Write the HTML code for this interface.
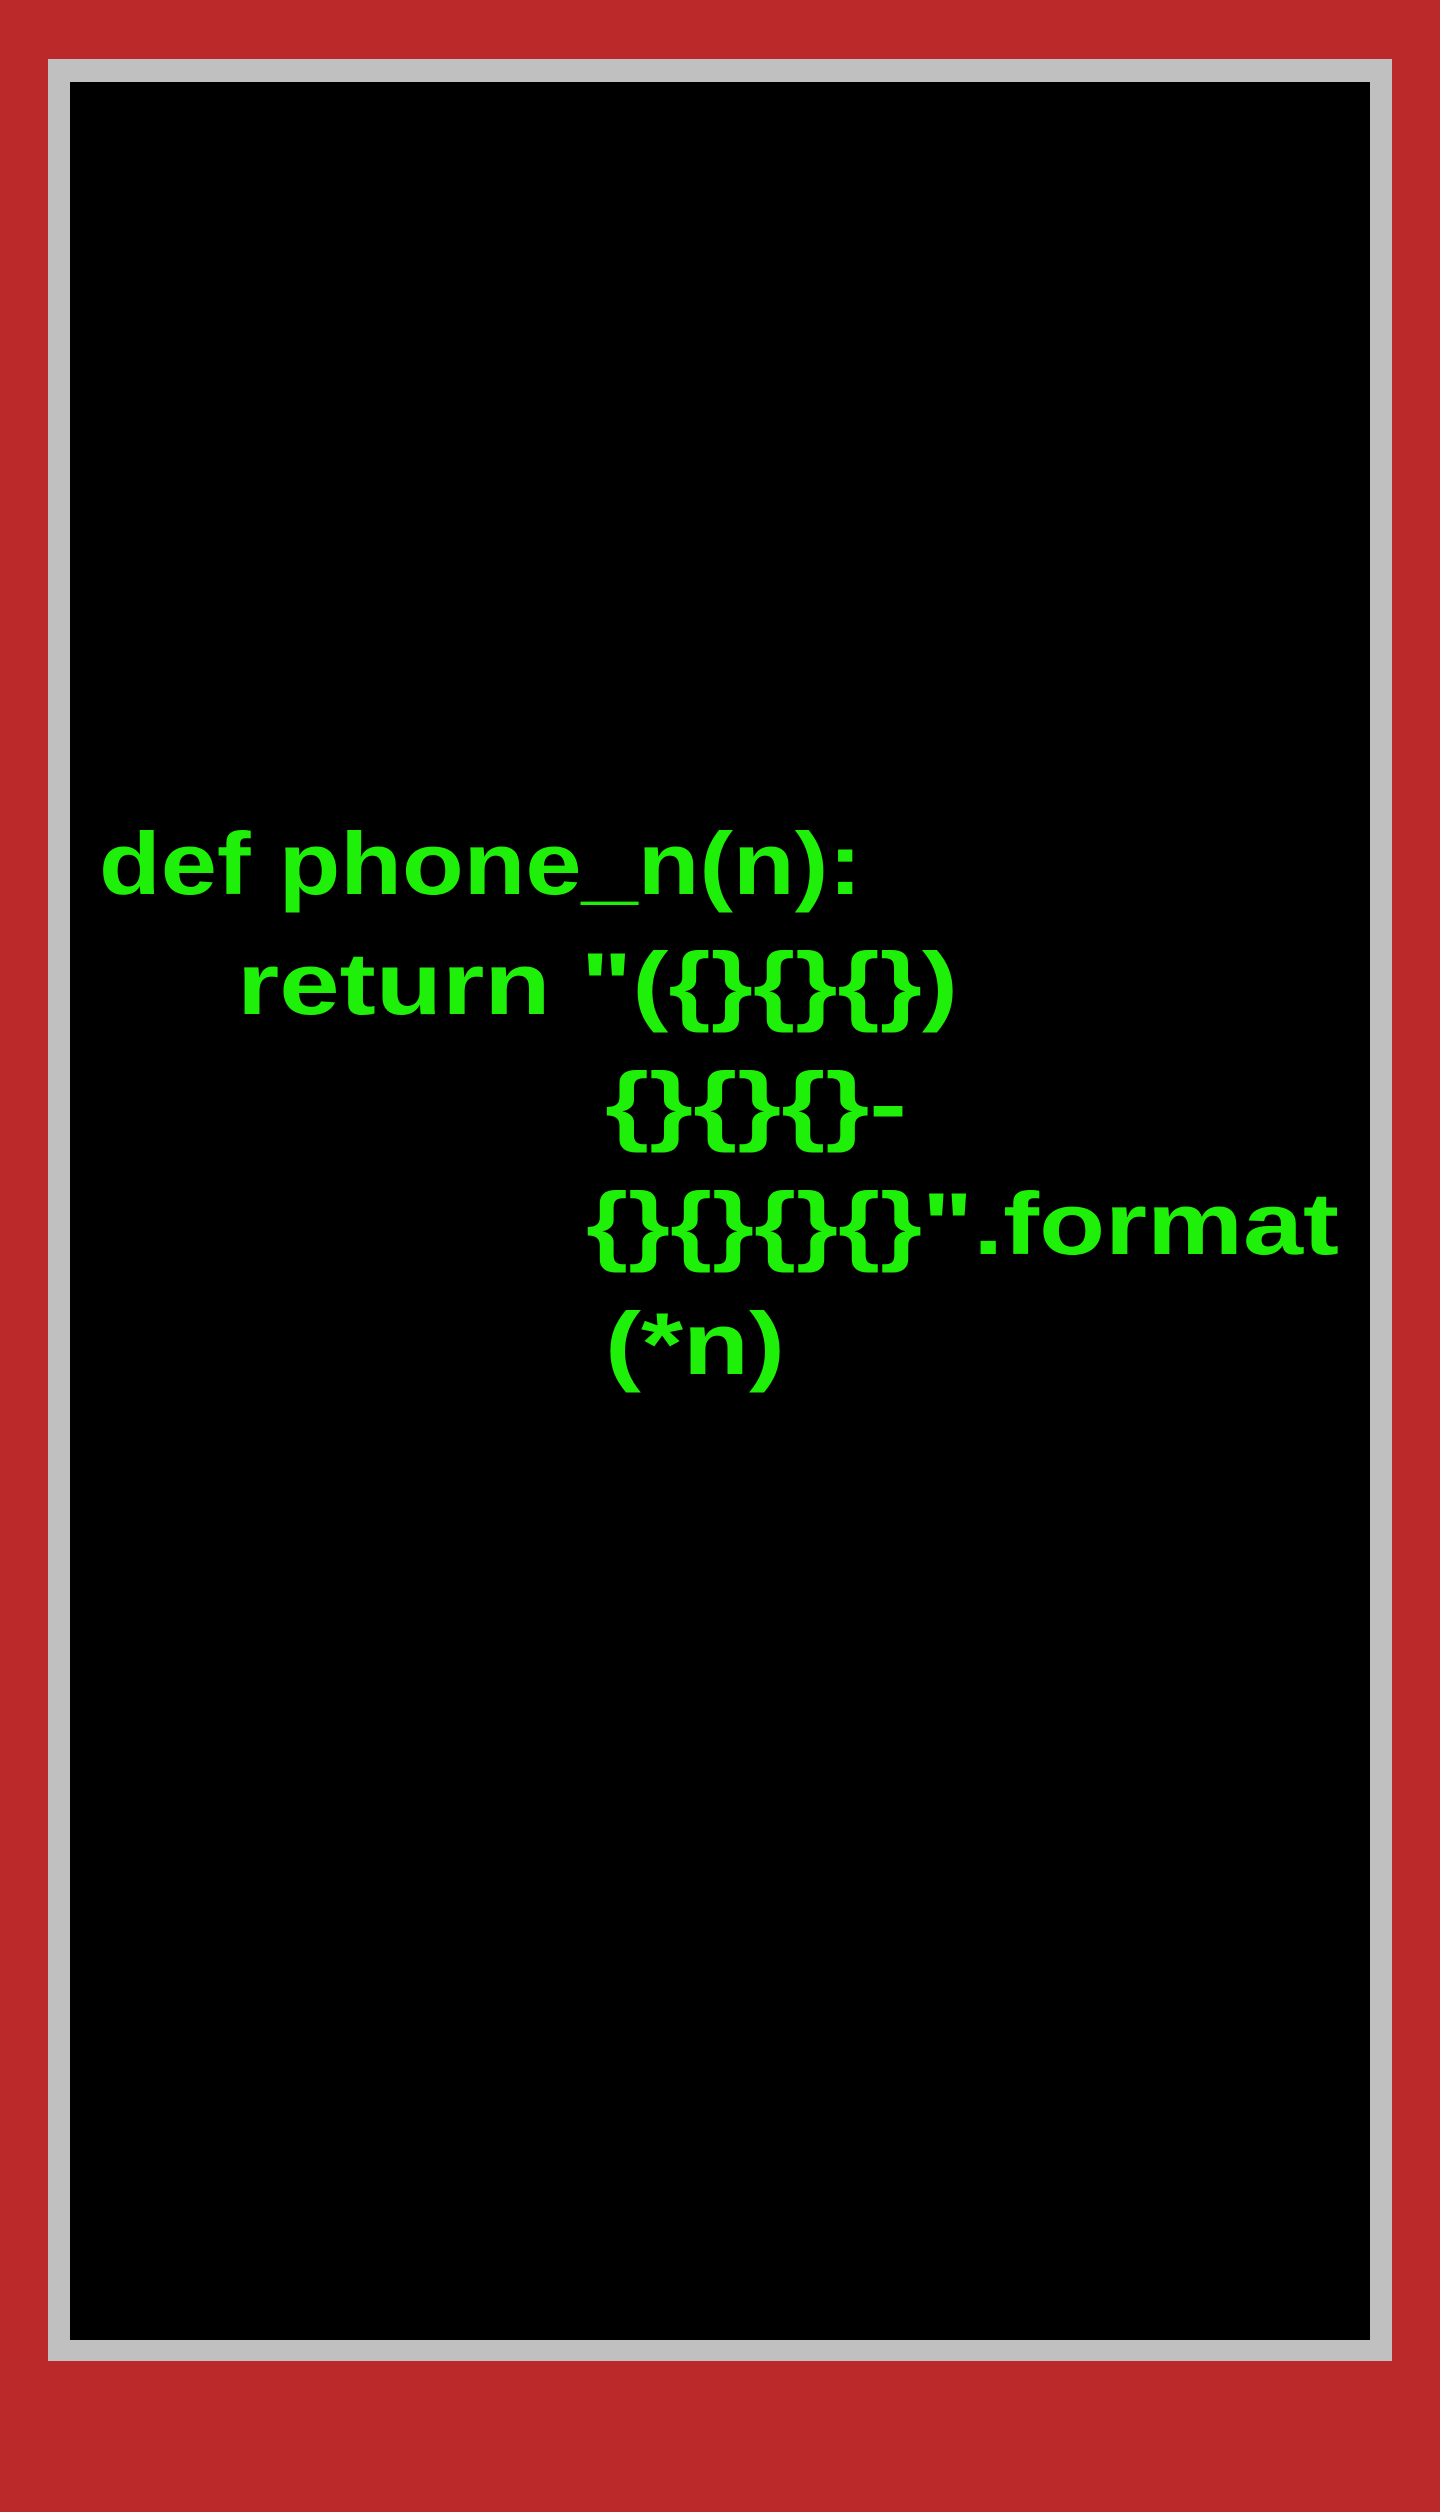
<!DOCTYPE html>
<html><head><meta charset="utf-8"><style>
html,body{margin:0;padding:0;width:1440px;height:2512px;background:#bc292b;overflow:hidden}
.frame{position:absolute;left:48px;top:59px;width:1344px;height:2302px;background:#c0c0c0}
.inner{position:absolute;left:70px;top:82px;width:1300px;height:2258px;background:#000}
svg{position:absolute;left:0;top:0}
text{font-family:"Liberation Sans",sans-serif;font-weight:bold;font-size:88px;fill:#1ff00a}
</style></head><body>
<div class="frame"></div><div class="inner"></div>
<svg width="1440" height="2512">
<text x="99" y="894" textLength="763" lengthAdjust="spacingAndGlyphs">def phone_n(n):</text>
<text x="237" y="1014" textLength="721" lengthAdjust="spacingAndGlyphs">return "({}{}{})</text>
<text x="605" y="1134" textLength="302" lengthAdjust="spacingAndGlyphs">{}{}{}-</text>
<text x="586" y="1254" textLength="753" lengthAdjust="spacingAndGlyphs">{}{}{}{}".format</text>
<text x="605" y="1374" textLength="180" lengthAdjust="spacingAndGlyphs">(*n)</text>
</svg>
</body></html>
